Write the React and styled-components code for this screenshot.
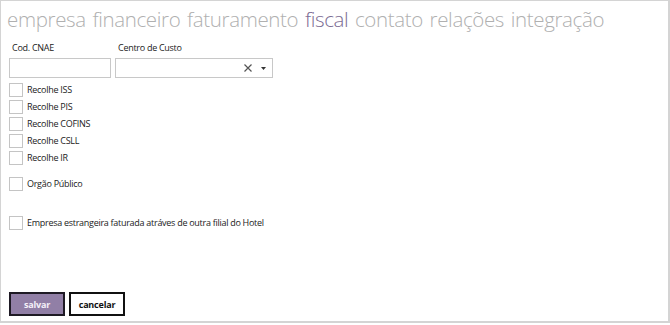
import React from "react";
import styled, { createGlobalStyle } from "styled-components";

const Global = createGlobalStyle`
  html, body { margin: 0; padding: 0; background: #fff; }
  body { font-family: "Open Sans", "Noto Sans", sans-serif; }
  * { box-sizing: border-box; }
`;

const Frame = styled.div`
  width: 670px;
  height: 323px;
  border: 1px solid #d4d4d4;
  border-right-width: 2px;
  border-bottom-width: 2px;
  display: flex;
  flex-direction: column;
  padding: 0 8px 5px 8px;
`;

const Tabs = styled.div`
  display: flex;
  gap: 6.6px;
  height: 37px;
  align-items: center;
  margin-left: -2px;
  padding-bottom: 2px;
`;

const Tab = styled.span`
  font-size: 20.5px;
  font-weight: 300;
  color: ${(p) => (p.$active ? "#7b6c93" : "#b0b0b0")};
  letter-spacing: -0.35px;
  cursor: pointer;
`;

const FieldRow = styled.div`
  display: flex;
  gap: 4px;
  margin-top: 3px;
`;

const Field = styled.div`
  display: flex;
  flex-direction: column;
  gap: 4px;
`;

const SmallText = `
  font-size: 9px;
  letter-spacing: -0.28px;
  color: #222;
`;

const Label = styled.label`
  ${SmallText}
  padding-left: 3px;
`;

const Input = styled.div`
  width: ${(p) => p.$w}px;
  height: 20px;
  border: 1px solid #c8c8c8;
  display: flex;
  align-items: center;
  justify-content: flex-end;
  gap: 9px;
  padding-right: 6px;
`;

const Checks = styled.div`
  display: flex;
  flex-direction: column;
  margin-top: 3px;
`;

const CheckRow = styled.div`
  display: flex;
  align-items: center;
  gap: 4px;
  height: 17px;
  margin-top: ${(p) => p.$gap || 0}px;
`;

const Box = styled.span`
  width: 14px;
  height: 14px;
  border: 1px solid #c4c4c4;
  background: #fff;
  flex-shrink: 0;
`;

const CheckText = styled.span`
  ${SmallText}
`;

const Spacer = styled.div`
  flex: 1;
`;

const Buttons = styled.div`
  display: flex;
  gap: 4px;
`;

const Button = styled.button`
  width: 56px;
  height: 24px;
  font-family: inherit;
  font-size: 9px;
  font-weight: 700;
  letter-spacing: -0.2px;
  padding: 0;
  border: 2px solid ${(p) => (p.$primary ? "#1e1a24" : "#111")};
  background: ${(p) => (p.$primary ? "#917fa6" : "#fff")};
  color: ${(p) => (p.$primary ? "#f4f0f8" : "#111")};
`;

const tabs = ["empresa", "financeiro", "faturamento", "fiscal", "contato", "relações", "integração"];

export default function App() {
  return (
    <>
      <Global />
      <Frame>
        <Tabs>
          {tabs.map((t) => (
            <Tab key={t} $active={t === "fiscal"}>{t}</Tab>
          ))}
        </Tabs>
        <FieldRow>
          <Field>
            <Label>Cod. CNAE</Label>
            <Input $w={102} />
          </Field>
          <Field>
            <Label>Centro de Custo</Label>
            <Input $w={158}>
              <svg width="8" height="8" viewBox="0 0 8 8">
                <path d="M0.5 0.5L7.5 7.5M7.5 0.5L0.5 7.5" stroke="#555" strokeWidth="1.2" />
              </svg>
              <svg width="5" height="3" viewBox="0 0 5 3">
                <path d="M0 0H5L2.5 3Z" fill="#333" />
              </svg>
            </Input>
          </Field>
        </FieldRow>
        <Checks>
          {["Recolhe ISS", "Recolhe PIS", "Recolhe COFINS", "Recolhe CSLL", "Recolhe IR"].map((c) => (
            <CheckRow key={c}>
              <Box />
              <CheckText>{c}</CheckText>
            </CheckRow>
          ))}
          <CheckRow $gap={9}>
            <Box />
            <CheckText>Orgão Público</CheckText>
          </CheckRow>
          <CheckRow $gap={22}>
            <Box />
            <CheckText>Empresa estrangeira faturada atráves de outra filial do Hotel</CheckText>
          </CheckRow>
        </Checks>
        <Spacer />
        <Buttons>
          <Button $primary>salvar</Button>
          <Button>cancelar</Button>
        </Buttons>
      </Frame>
    </>
  );
}
